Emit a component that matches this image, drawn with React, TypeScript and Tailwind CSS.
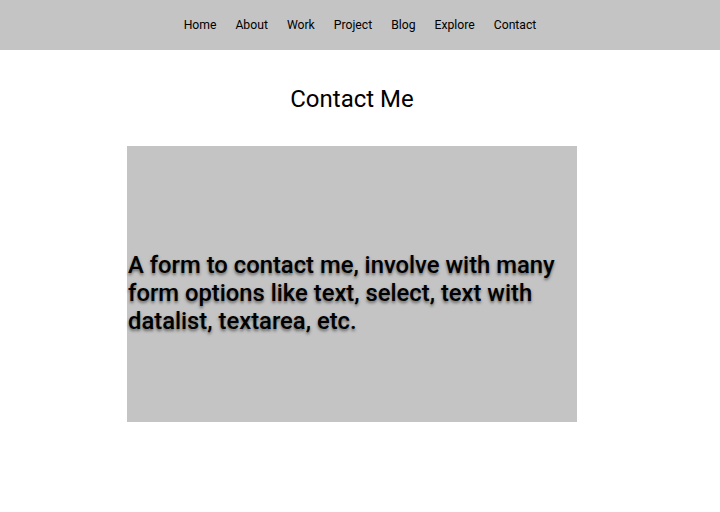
const links = ["Home", "About", "Work", "Project", "Blog", "Explore", "Contact"];

export default function App() {
  return (
    <div className="min-h-[512px] bg-white font-['Roboto',sans-serif] text-black">
      <nav className="h-[50px] bg-[#c4c4c4] flex items-center justify-center gap-[19px] text-[12.2px]">
        {links.map((l) => (
          <a key={l} href="#" className="leading-none">
            {l}
          </a>
        ))}
      </nav>
      <main className="ml-[127px] w-[450px] flex flex-col items-center">
        <h1 className="mt-[35px] text-[24px] leading-[28px]">Contact Me</h1>
        <div className="mt-[33px] w-full h-[276px] bg-[#c4c4c4] flex items-center pt-[18px] pl-px">
          <p className="text-[23.8px] leading-[28px] font-medium [text-shadow:0_2px_3px_rgba(0,0,0,0.5)]">
            A form to contact me, involve with many form options like text, select, text with datalist, textarea, etc.
          </p>
        </div>
      </main>
    </div>
  );
}
